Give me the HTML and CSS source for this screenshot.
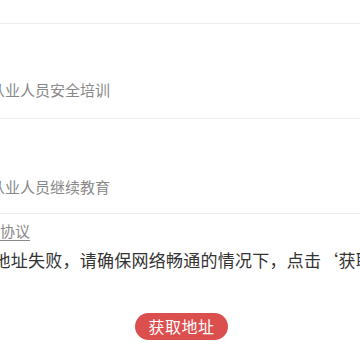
FILE: index.html
```html
<!DOCTYPE html>
<html lang="zh-CN">
<head>
<meta charset="utf-8">
<link rel="stylesheet" href="styles.css">
</head>
<body>
<div class="page">
  <div class="top"></div>
  <div class="row"><span class="row-text">从业人员安全培训</span></div>
  <div class="row"><span class="row-text">从业人员继续教育</span></div>
  <div class="agree"><span class="link">用户协议</span></div>
  <p class="msg">获取地址失败，请确保网络畅通的情况下，点击‘获取地址’按钮重试</p>
  <div class="btn-wrap"><button class="btn">获取地址</button></div>
</div>
</body>
</html>
```
FILE: styles.css
```css
html, body {
  margin: 0;
  padding: 0;
  background: #fff;
  overflow: hidden;
}
.page {
  width: 360px;
  height: 360px;
  font-family: "Noto Sans CJK SC", "Noto Sans", sans-serif;
  overflow: hidden;
}
.top {
  height: 23px;
  border-bottom: 1px solid #ececec;
}
.row {
  border-bottom: 1px solid #ececec;
  display: flex;
  align-items: flex-end;
  padding-bottom: 18px;
  height: 76px;
}
.row + .row {
  padding-bottom: 16px;
  height: 78px;
}
.row-text {
  margin-left: -10px;
  font-size: 15px;
  line-height: 20px;
  color: #888;
  white-space: nowrap;
}
.agree {
  margin-top: 6px;
  height: 20px;
  line-height: 20px;
  white-space: nowrap;
}
.link {
  display: inline-block;
  margin-left: -30px;
  font-size: 15px;
  color: #8a8a8a;
  text-decoration: underline;
  text-underline-offset: 3px;
}
.msg {
  margin: 8px 0 0 -41px;
  width: 460px;
  font-size: 17px;
  letter-spacing: 0.25px;
  line-height: 24px;
  color: #333;
  white-space: nowrap;
}
.btn-wrap {
  display: flex;
  justify-content: center;
  margin-top: 41px;
}
.btn {
  width: 93px;
  height: 27px;
  border: none;
  border-radius: 14px;
  background: #dc4f4f;
  color: #fff;
  font-family: "Noto Sans CJK SC", sans-serif;
  font-size: 16px;
  letter-spacing: 0.5px;
  line-height: 27px;
  padding: 0;
  margin-left: 3px;
}
```
